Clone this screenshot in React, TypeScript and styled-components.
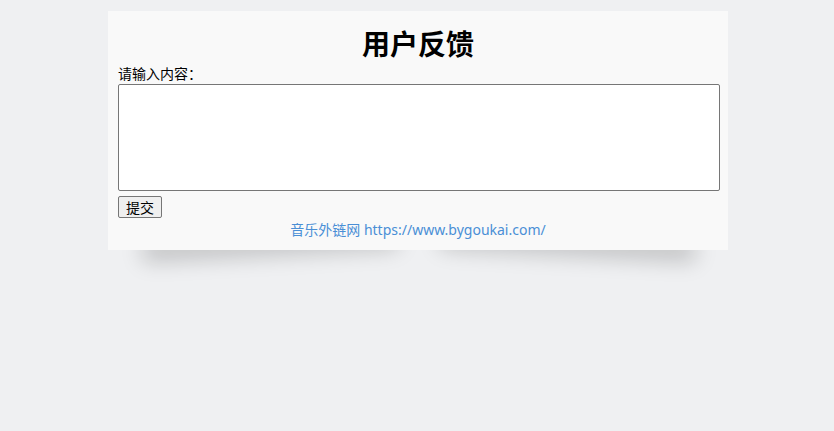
import React from 'react';
import styled, { createGlobalStyle } from 'styled-components';

const GlobalStyle = createGlobalStyle`
  html {
    background: #eff0f2;
  }
  body {
    margin: 0;
    padding-left: 2px;
    font-family: "Noto Sans", "Noto Sans CJK SC", sans-serif;
  }
`;

// room under the card so the lifted shadows stay inside the layout
const Stage = styled.div`
  position: relative;
  isolation: isolate;
  width: 620px;
  margin: 11px auto 0;
  padding-bottom: 50px;
`;

// the two "lifted corner" shadows that sit under the card
const Lift = styled.span<{ $side: 'left' | 'right' }>`
  position: absolute;
  z-index: 0;
  bottom: 60px;
  ${(p) => (p.$side === 'left' ? 'left: 34px;' : 'right: 32px;')}
  width: 255px;
  height: 20px;
  background: transparent;
  box-shadow: 0 14px 22px rgba(0, 0, 0, 0.22);
  transform: rotate(${(p) => (p.$side === 'left' ? -3 : 3)}deg);
`;

const Panel = styled.div`
  position: relative;
  z-index: 1;
  padding: 0 10px 10px;
  background: #f9f9f9;
`;

const Title = styled.h2`
  margin: 0;
  padding: 15px 0 3px;
  font-size: 28px;
  line-height: 36px;
  font-weight: 700;
  text-align: center;
  color: #000;
`;

const Label = styled.label`
  display: block;
  font-size: 14px;
  line-height: 18px;
  color: #000;
`;

const Box = styled.textarea`
  display: block;
  box-sizing: border-box;
  width: 602px;
  height: 107px;
  margin: 1px 0 0;
  border: 1px solid #767676;
  border-radius: 2px;
  background: #fff;
  resize: none;
`;

const Submit = styled.button`
  display: block;
  margin-top: 5px;
  height: 22px;
  padding: 0 7px;
  font-family: inherit;
  font-size: 14px;
  color: #000;
  background: #efefef;
  border: 1px solid #767676;
  border-radius: 2px;
`;

const Footer = styled.a`
  display: block;
  margin-top: 2px;
  font-size: 14px;
  line-height: 20px;
  text-align: center;
  color: #4a8fd6;
  text-decoration: none;
`;

export default function App(): JSX.Element {
  return (
    <>
      <GlobalStyle />
      <Stage>
        <Lift $side="left" />
        <Lift $side="right" />
        <Panel>
          <Title>用户反馈</Title>
          <Label htmlFor="content">请输入内容：</Label>
          <Box id="content" />
          <Submit>提交</Submit>
          <Footer href="#">音乐外链网 https://www.bygoukai.com/</Footer>
        </Panel>
      </Stage>
    </>
  );
}
